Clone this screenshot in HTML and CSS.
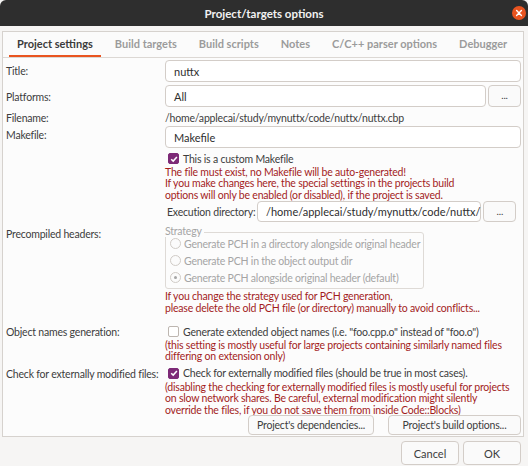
FILE: index.html
```html
<!DOCTYPE html>
<html>
<head>
<meta charset="utf-8">
<link rel="stylesheet" href="styles.css">
</head>
<body>
<div class="window">
  <div class="titlebar">
    <span class="title">Project/targets options</span>
    <span class="close"><svg width="14" height="14" viewBox="0 0 14 14"><circle cx="7" cy="7" r="7" fill="#e95420"/><path d="M4.6 4.6 L9.4 9.4 M9.4 4.6 L4.6 9.4" stroke="#fff" stroke-width="1.4" stroke-linecap="round"/></svg></span>
  </div>
  <div class="body">
    <div class="notebook">
      <div class="tabs">
        <div class="tab active">Project settings</div>
        <div class="tab">Build targets</div>
        <div class="tab">Build scripts</div>
        <div class="tab">Notes</div>
        <div class="tab">C/C++ parser options</div>
        <div class="tab">Debugger</div>
      </div>
      <div class="page">
        <div class="row r-title">
          <div class="label">Title:</div>
          <div class="field"><div class="input">nuttx</div></div>
        </div>
        <div class="row r-plat">
          <div class="label">Platforms:</div>
          <div class="field"><div class="input">All</div><div class="btn dots">...</div></div>
        </div>
        <div class="row r-file">
          <div class="label">Filename:</div>
          <div class="value">/home/applecai/study/mynuttx/code/nuttx/nuttx.cbp</div>
        </div>
        <div class="row r-make">
          <div class="label">Makefile:</div>
          <div class="col">
            <div class="input">Makefile</div>
            <div class="check"><span class="cb on"><svg width="8" height="8" viewBox="0 0 8 8"><path d="M1.2 4.2 L3.2 6.1 L6.9 1.9" fill="none" stroke="#fff" stroke-width="1.5"/></svg></span>This is a custom Makefile</div>
            <div class="warn">The file must exist, no Makefile will be auto-generated!<br>If you make changes here, the special settings in the projects build<br>options will only be enabled (or disabled), if the project is saved.</div>
            <div class="exec"><span class="elabel">Execution directory:</span><div class="input">/home/applecai/study/mynuttx/code/nuttx/</div><div class="btn dots">...</div></div>
          </div>
        </div>
        <div class="row r-pch">
          <div class="label">Precompiled headers:</div>
          <div class="col">
            <div class="group">
              <span class="legend">Strategy</span>
              <div class="radio"><span class="rb"></span>Generate PCH in a directory alongside original header</div>
              <div class="radio"><span class="rb"></span>Generate PCH in the object output dir</div>
              <div class="radio"><span class="rb sel"></span>Generate PCH alongside original header (default)</div>
            </div>
            <div class="warn">If you change the strategy used for PCH generation,<br>please delete the old PCH file (or directory) manually to avoid conflicts...</div>
          </div>
        </div>
        <div class="row r-obj">
          <div class="label">Object names generation:</div>
          <div class="col">
            <div class="check"><span class="cb"></span>Generate extended object names (i.e. "foo.cpp.o" instead of "foo.o")</div>
            <div class="warn">(this setting is mostly useful for large projects containing similarly named files<br>differing on extension only)</div>
          </div>
        </div>
        <div class="row r-ext">
          <div class="label">Check for externally modified files:</div>
          <div class="col">
            <div class="check"><span class="cb on"><svg width="8" height="8" viewBox="0 0 8 8"><path d="M1.2 4.2 L3.2 6.1 L6.9 1.9" fill="none" stroke="#fff" stroke-width="1.5"/></svg></span>Check for externally modified files (should be true in most cases).</div>
            <div class="warn">(disabling the checking for externally modified files is mostly useful for projects<br>on slow network shares. Be careful, external modification might silently<br>override the files, if you do not save them from inside Code::Blocks)</div>
          </div>
        </div>
        <div class="actions">
          <div class="btn wide b1">Project's dependencies...</div>
          <div class="btn wide b2">Project's build options...</div>
        </div>
      </div>
    </div>
    <div class="footer">
      <div class="btn fbtn">Cancel</div>
      <div class="btn fbtn">OK</div>
    </div>
  </div>
</div>
</body>
</html>
```

FILE: styles.css
```css
* { box-sizing: border-box; }
html, body { margin: 0; padding: 0; }
body {
  width: 528px;
  height: 466px;
  overflow: hidden;
  background: #f6f5f4;
  font-family: "Lato", "Open Sans", sans-serif;
  font-size: 10.5px;
  letter-spacing: -0.2px;
  color: #3d3d3d;
  white-space: nowrap;
}
.window { width: 528px; height: 466px; }
.titlebar {
  height: 26px;
  background: #2e2e2e;
  border-radius: 6px 6px 0 0;
  display: flex;
  align-items: center;
  justify-content: center;
  position: relative;
}
.title { color: #f2f2f2; font-weight: bold; font-size: 11.5px; letter-spacing: 0; }
.close { position: absolute; right: 2px; top: 6px; width: 14px; height: 14px; display: flex; }
.body { padding: 5px 4px 0 2px; }
.notebook {
  border: 1px solid #d6d2ce;
  background: #fcfcfc;
  height: 406px;
  overflow: hidden;
}
.tabs {
  display: flex;
  height: 26px;
  border-bottom: 1px solid #dcd8d4;
  padding-left: 6px;
  background: #fbfbfb;
}
.tab {
  padding: 0 11px;
  font-weight: bold;
  font-size: 11px;
  letter-spacing: 0;
  color: #9b9b9b;
  display: flex;
  align-items: center;
  border-bottom: 2px solid transparent;
}
.tab.active { color: #3b3b3b; border-bottom-color: #e95420; padding: 0 8px; margin-right: 3px; }
.page { padding: 2px 2px 0 2px; }
.row { display: flex; align-items: flex-start; }
.label { width: 160px; flex: none; padding-left: 1px; }
.field { flex: 1; display: flex; gap: 2px; }
.col { flex: 1; display: flex; flex-direction: column; min-width: 0; }
.input {
  flex: 1;
  height: 22px;
  border: 1px solid #d3cdc8;
  border-radius: 4px;
  background: #fff;
  padding-left: 8px;
  display: flex;
  align-items: center;
  color: #2e2e2e;
  font-size: 11px;
  letter-spacing: 0;
  min-width: 0;
}
.btn {
  border: 1px solid #d3cdc8;
  border-radius: 4px;
  background: #fafafa;
  display: flex;
  align-items: center;
  justify-content: center;
  color: #3d3d3d;
}
.dots { width: 33px; height: 22px; flex: none; font-size: 10px; padding-bottom: 2px; }
.r-title .label { padding-top: 5px; }
.r-plat { margin-top: 3px; }
.r-plat .label { padding-top: 6px; }
.r-file { margin-top: 3px; height: 15px; align-items: center; }
.value { color: #3d3d3d; }
.r-make { margin-top: 1px; }
.r-make .label { padding-top: 3px; }
.r-make .col .input { flex: none; }
.check { display: flex; align-items: center; height: 15px; margin-top: 3px; padding-left: 3px; }
.cb {
  width: 11px; height: 11px; border-radius: 2px;
  border: 1px solid #bdb6b0; background: #fff; flex: none;
  margin-right: 4px; display: flex; align-items: center; justify-content: center;
}
.cb.on { background: #7d2a77; border-color: #7d2a77; }
.warn { color: #a31c1c; line-height: 11.4px; }
.r-make .warn { margin-top: 1px; }
.exec { display: flex; align-items: center; gap: 2px; margin-top: 0; height: 21px; }
.exec .input { height: 21px; }
.exec .dots { height: 21px; }
.elabel { width: 90px; flex: none; padding-left: 2px; }
.r-pch { margin-top: 4px; }
.r-pch .label { padding-top: 2px; }
.group {
  width: 259px;
  border: 1px solid #dedad6;
  border-radius: 3px;
  margin-top: 6px;
  padding: 2px 0 2px 4px;
  position: relative;
  color: #a5a5a5;
}
.legend {
  position: absolute; top: -8px; left: -1px;
  background: #fcfcfc; padding-right: 2px; color: #a5a5a5;
}
.radio { display: flex; align-items: center; height: 17px; }
.rb {
  width: 11px; height: 11px; border-radius: 50%; flex: none;
  border: 1px solid #d0cbc6; background: #fbfbfb; margin-right: 3px; position: relative;
}
.rb.sel::after {
  content: ""; position: absolute; left: 3px; top: 3px; width: 3px; height: 3px; border-radius: 50%; background: #a5a5a5;
}
.r-pch .warn { margin-top: 2px; }
.r-obj { margin-top: 9px; }
.r-obj .label { padding-top: 3px; }
.r-obj .check { margin-top: 1px; }
.r-obj .warn { margin-top: 1px; }
.r-ext { margin-top: 2px; }
.r-ext .label { padding-top: 3px; }
.r-ext .check { margin-top: 1px; }
.r-ext .warn { margin-top: 1px; }
.actions { display: flex; justify-content: flex-end; gap: 14px; margin-top: -1px; }
.wide { height: 20px; }
.b1 { width: 126px; }
.b2 { width: 133px; }
.footer { display: flex; justify-content: flex-end; gap: 4px; padding-right: 3px; margin-top: 4px; }
.fbtn { width: 58px; height: 24px; font-size: 11px; letter-spacing: 0; }
```
